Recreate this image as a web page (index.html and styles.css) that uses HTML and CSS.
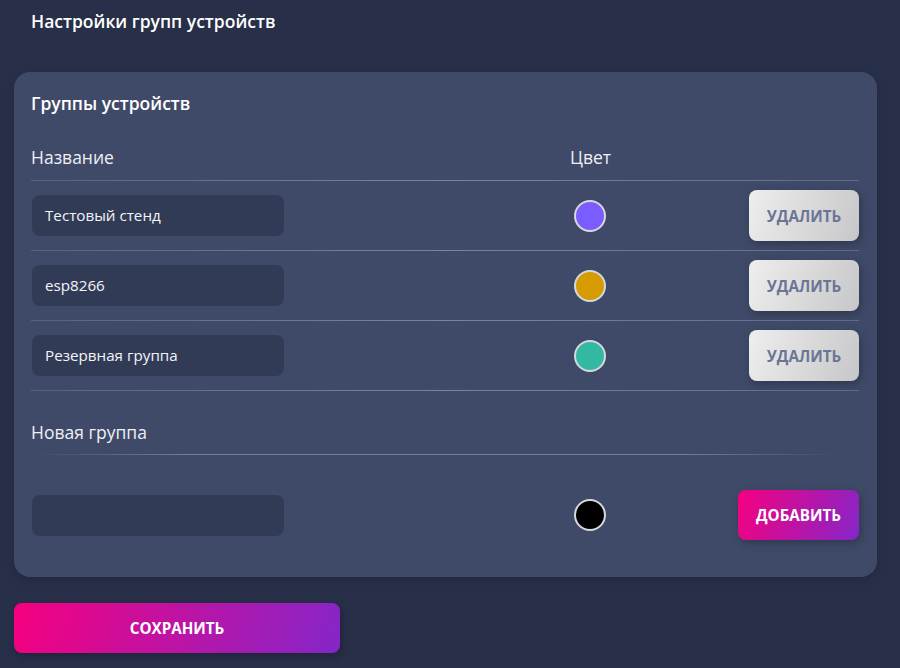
FILE: index.html
```html
<!DOCTYPE html>
<html lang="ru">
<head>
<meta charset="utf-8">
<title>Настройки групп устройств</title>
<link rel="stylesheet" href="styles.css">
</head>
<body>
<div class="page">
  <h1 class="title">Настройки групп устройств</h1>
  <section class="card">
    <h2 class="card-title">Группы устройств</h2>
    <div class="grid head">
      <div class="col-label">Название</div>
      <div class="col-label">Цвет</div>
      <div></div>
    </div>
    <div class="sep"></div>
    <div class="grid row">
      <div class="field">Тестовый стенд</div>
      <div class="swatch-cell"><span class="swatch" style="background:#7a5cff"></span></div>
      <button class="btn-del">УДАЛИТЬ</button>
    </div>
    <div class="sep"></div>
    <div class="grid row">
      <div class="field">esp8266</div>
      <div class="swatch-cell"><span class="swatch" style="background:#d59b00"></span></div>
      <button class="btn-del">УДАЛИТЬ</button>
    </div>
    <div class="sep"></div>
    <div class="grid row">
      <div class="field">Резервная группа</div>
      <div class="swatch-cell"><span class="swatch" style="background:#33b9a2"></span></div>
      <button class="btn-del">УДАЛИТЬ</button>
    </div>
    <div class="sep"></div>
    <div class="new-label">Новая группа</div>
    <div class="sep sep-new"></div>
    <div class="grid row new-row">
      <div class="field"></div>
      <div class="swatch-cell"><span class="swatch" style="background:#000000"></span></div>
      <button class="btn-add">ДОБАВИТЬ</button>
    </div>
  </section>
  <button class="btn-save">СОХРАНИТЬ</button>
</div>
</body>
</html>
```

FILE: styles.css
```css
* { box-sizing: border-box; }
html, body { margin: 0; padding: 0; }
body {
  background: #282f48;
  font-family: "Open Sans", "Noto Sans", sans-serif;
  color: #f1f2f6;
  width: 900px;
  height: 668px;
  overflow: hidden;
}
.page {
  padding: 10px 14px 0 14px;
}
.title {
  margin: 0 0 0 17px;
  font-size: 17.5px;
  font-weight: 600;
  line-height: 22px;
  color: #ffffff;
}
.card {
  margin-top: 40px;
  width: 863px;
  background: #3f4a68;
  border-radius: 16px;
  padding: 20px 18px 0 17px;
  height: 505px;
  box-shadow: 0 4px 12px rgba(0,0,0,0.15);
}
.card-title {
  margin: 0;
  font-size: 17.5px;
  font-weight: 600;
  line-height: 22px;
  color: #ffffff;
}
.grid {
  display: grid;
  grid-template-columns: 539px 1fr auto;
  align-items: center;
}
.head {
  margin-top: 32px;
  height: 34px;
  align-items: start;
}
.col-label {
  font-size: 17.5px;
  line-height: 22px;
  color: #eef0f5;
}
.sep {
  height: 1px;
  background: linear-gradient(90deg, rgba(160,170,200,0.25), rgba(170,180,210,0.55) 50%, rgba(160,170,200,0.35));
}
.row {
  height: 69px;
}
.field {
  width: 252px;
  height: 41px;
  margin-left: 1px;
  background: #323b56;
  border-radius: 8px;
  padding: 0 13px;
  font-size: 15.2px;
  line-height: 41px;
  color: #f3f4f8;
}
.swatch-cell {
  padding-left: 4px;
  display: flex;
}
.swatch {
  width: 32px;
  height: 32px;
  border-radius: 50%;
  border: 2px solid #d6d8de;
}
.btn-del {
  width: 110px;
  height: 51px;
  border: none;
  border-radius: 8px;
  background: linear-gradient(110deg, #eeeeee, #c7c7c9);
  color: #6b7696;
  font-family: inherit;
  font-size: 15.2px;
  font-weight: 700;
  box-shadow: 2px 3px 8px rgba(0,0,0,0.25);
  padding: 0;
}
.new-label {
  margin-top: 30px;
  font-size: 17.5px;
  line-height: 22px;
  color: #eef0f5;
}
.sep-new {
  margin-top: 11px;
  margin-right: 20px;
  background: linear-gradient(90deg, rgba(160,170,200,0), rgba(170,180,210,0.5) 20%, rgba(170,180,210,0.5) 80%, rgba(160,170,200,0));
}
.new-row {
  margin-top: 25px;
  height: 70px;
}
.btn-add {
  width: 121px;
  height: 50px;
  border: none;
  border-radius: 8px;
  background: linear-gradient(110deg, #f6007f, #8426c9);
  color: #ffffff;
  font-family: inherit;
  font-size: 15.2px;
  font-weight: 700;
  box-shadow: 2px 3px 8px rgba(0,0,0,0.25);
  padding: 0;
}
.btn-save {
  display: block;
  margin-top: 26px;
  width: 326px;
  height: 50px;
  border: none;
  border-radius: 8px;
  background: linear-gradient(110deg, #f6007f, #8426c9);
  color: #ffffff;
  font-family: inherit;
  font-size: 15.2px;
  font-weight: 700;
  box-shadow: 2px 3px 8px rgba(0,0,0,0.25);
  padding: 0;
}
```
